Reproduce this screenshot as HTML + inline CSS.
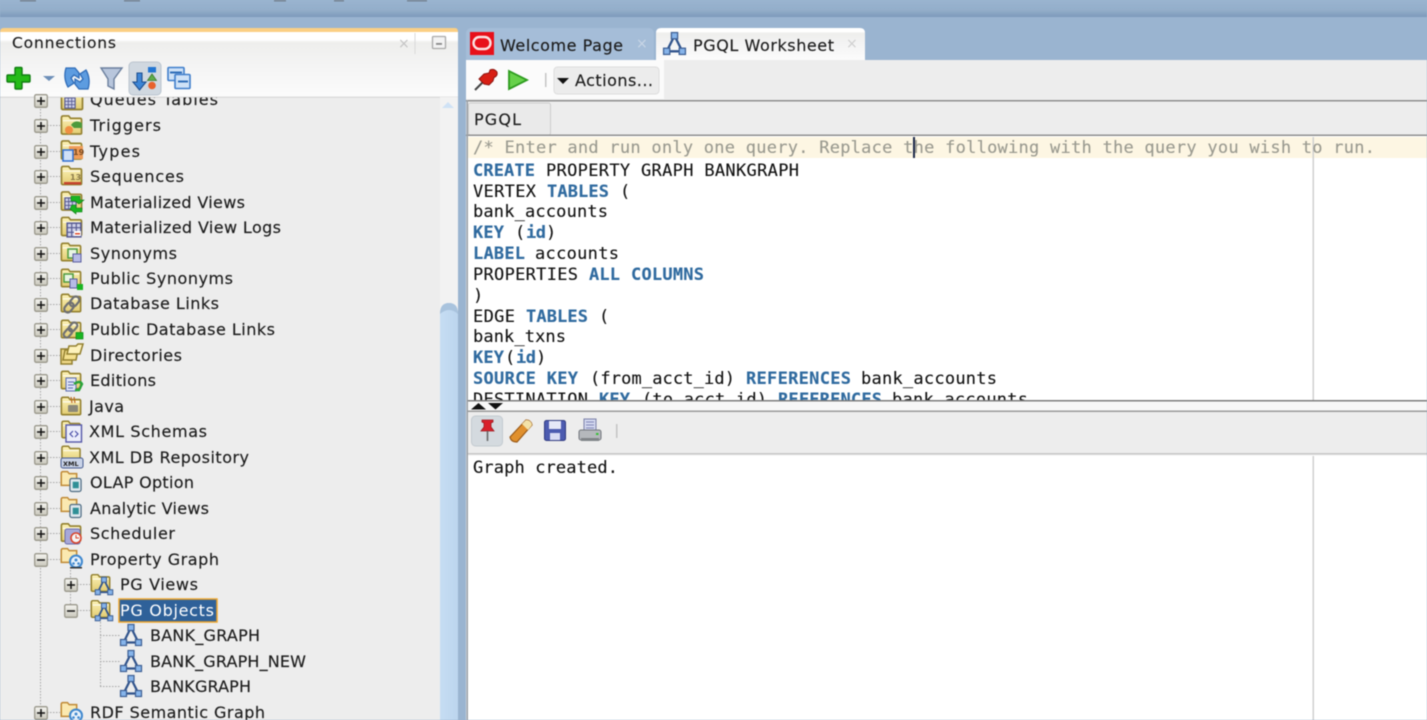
<!DOCTYPE html>
<html lang="en"><head><meta charset="utf-8"><title>PGQL Worksheet</title>
<style>
html,body{margin:0;padding:0;width:1427px;height:720px;overflow:hidden;background:#9ab4d0}
svg{display:block;position:absolute;left:0;top:0;filter:blur(.5px)}
.t{font-family:"DejaVu Sans","Liberation Sans",sans-serif;font-size:16px;fill:#1c1c1c;stroke:#1c1c1c;stroke-width:.15px}
.m{font-family:"DejaVu Sans Mono","Liberation Mono",monospace;font-size:17px;fill:#111;stroke:#111;stroke-width:.12px}
.b{font-weight:bold;fill:#2f6a9f;stroke:#2f6a9f}
.c{fill:#9a9a90;stroke:#9a9a90}
</style></head><body>
<svg width="1427" height="720" viewBox="0 0 1427 720" xmlns="http://www.w3.org/2000/svg">
<defs>
<linearGradient id="gt" x1="0" y1="0" x2="0" y2="1"><stop offset="0" stop-color="#9ab4d0"/><stop offset=".6" stop-color="#93aeca"/><stop offset="1" stop-color="#7d99ba"/></linearGradient>
<linearGradient id="gh" x1="0" y1="0" x2="0" y2="1"><stop offset="0" stop-color="#fff"/><stop offset=".12" stop-color="#fff"/><stop offset=".16" stop-color="#eeeeec"/><stop offset=".45" stop-color="#f3f3f3"/><stop offset="1" stop-color="#fcfcfc"/></linearGradient>
<linearGradient id="gf" x1="0" y1="0" x2="0" y2="1"><stop offset="0" stop-color="#fdf3b8"/><stop offset="1" stop-color="#e2cc72"/></linearGradient>
<linearGradient id="gb" x1="0" y1="0" x2="0" y2="1"><stop offset="0" stop-color="#f6f6f2"/><stop offset="1" stop-color="#c9c7bb"/></linearGradient>
<linearGradient id="gs" x1="0" y1="0" x2="1" y2="0"><stop offset="0" stop-color="#c6ddf3"/><stop offset="1" stop-color="#bcd5ee"/></linearGradient>
<symbol id="f" viewBox="0 0 24 22" overflow="visible"><path d="M1.500 19V3.500Q1.500 1.500 3.500 1.500H9L11 4H21Q22.500 4 22.500 5.500V19.500Q22.500 20.500 21 20.500H3Q1.500 20.500 1.500 19Z" fill="url(#gf)" stroke="#93802f" stroke-width="1.700"/><path d="M3 6.500H21" stroke="#fff" stroke-width="1"/></symbol>
<symbol id="fo" viewBox="0 0 24 22" overflow="visible"><path d="M1.500 18V3.500Q1.500 1.500 3.500 1.500H9L11 4H20V18Z" fill="#fbe9b0" stroke="#c08a35" stroke-width="1.800"/></symbol>
<symbol id="p" viewBox="0 0 14 14"><rect x=".7" y=".7" width="12.600" height="12.600" rx="1.500" fill="url(#gb)" stroke="#9a988c" stroke-width="1.300"/><path d="M3 7H11M7 3V11" stroke="#111" stroke-width="1.500"/></symbol>
<symbol id="n" viewBox="0 0 14 14"><rect x=".7" y=".7" width="12.600" height="12.600" rx="1.500" fill="url(#gb)" stroke="#9a988c" stroke-width="1.300"/><path d="M3 7H11" stroke="#111" stroke-width="1.500"/></symbol>
<symbol id="g" viewBox="0 0 24 24"><path d="M12 4.500L4.500 19.500H19.500Z" fill="none" stroke="#31548c" stroke-width="2.200"/><rect x="9" y="1.500" width="6" height="6" fill="#86b4ea" stroke="#3d5f94" stroke-width="1.200"/><rect x="1.500" y="16.500" width="6" height="6" fill="#86b4ea" stroke="#3d5f94" stroke-width="1.200"/><rect x="16.500" y="16.500" width="6" height="6" fill="#86b4ea" stroke="#3d5f94" stroke-width="1.200"/></symbol>
<symbol id="d" viewBox="0 0 14 16"><rect x="1" y="1" width="12" height="14" rx="2" fill="#dfe8ee" stroke="#4d6b82" stroke-width="1.300"/><rect x="4" y="4.500" width="6.500" height="7" fill="#2f8f96"/></symbol>
<symbol id="u" viewBox="0 0 14 14"><circle cx="7" cy="7" r="6" fill="#e8f2fb" stroke="#3f88cf" stroke-width="2"/><circle cx="7" cy="5.500" r="1.500" fill="#3f88cf"/><circle cx="4.500" cy="9" r="1.300" fill="#3f88cf"/><circle cx="9.500" cy="9" r="1.300" fill="#3f88cf"/></symbol>
<symbol id="tb" viewBox="0 0 14 14"><rect x="1" y="1" width="12" height="12" fill="#cfd2ea" stroke="#55588f" stroke-width="1.300"/><path d="M1 5H13M1 9H13M5 1V13M9 1V13" stroke="#55588f"/></symbol>
<clipPath id="cq"><rect x="0" y="97.500" width="440" height="30"/></clipPath>
<clipPath id="ce"><rect x="468" y="136" width="959" height="264"/></clipPath>
</defs>

<!-- top bar -->
<rect width="1427" height="720" fill="#9ab4d0"/>
<rect width="1427" height="17" fill="url(#gt)"/>
<g fill="#6a7480" opacity=".8"><rect x="20" y="0" width="16" height="1.500"/><rect x="124" y="0" width="16" height="1.500"/><rect x="274" y="0" width="12" height="1.500"/><rect x="334" y="0" width="10" height="1.500"/><rect x="407" y="0" width="20" height="1.500"/></g>

<!-- left panel -->
<path d="M0 32Q0 28 4 28H455Q458 28 458 32V720H0Z" fill="#fbcf84"/>
<rect x="0" y="32" width="458" height="65" fill="url(#gh)"/>
<rect x="0" y="97" width="458" height="623" fill="#ededed"/>
<rect x="0" y="96.500" width="458" height="1.500" fill="#dcdcdc"/>
<text class="t" x="12" y="48" textLength="104" style="font-size:15.500px">Connections</text>
<text x="398" y="48" style="font-family:'DejaVu Sans',sans-serif;font-size:14px;fill:#c4c4c4">×</text>
<rect x="414.500" y="33" width="1" height="21" fill="#d9d9d9"/>
<rect x="432.500" y="36.500" width="13" height="12" rx="1" fill="#f3f3f3" stroke="#a9a9a9" stroke-width="1.300"/><rect x="436" y="43" width="6" height="1.800" fill="#888"/>

<!-- left toolbar -->
<path d="M15 68.500Q15 67.500 16 67.500H21Q22 67.500 22 68.500V75H29Q30 75 30 76V81Q30 82 29 82H22V88Q22 89 21 89H16Q15 89 15 88V82H8Q7 82 7 81V76Q7 75 8 75H15Z" fill="#25bb18" stroke="#0f7d10" stroke-width="1.400"/>
<path d="M43 76H55L49 81Z" fill="#6d8fb8"/>
<path d="M66 68H75L79 73V78L74 75L71 78L74 83L68 87Q63 78 66 68Z" fill="#5d9ce0" stroke="#2f6cb8" stroke-width="1.300"/>
<path d="M88 89H79L75 84V79L80 82L83 79L80 74L86 70Q91 79 88 89Z" fill="#5d9ce0" stroke="#2f6cb8" stroke-width="1.300"/>
<path d="M101 68H122L114 79V89L108 86V79Z" fill="#b8c6dc" stroke="#6b7f9d" stroke-width="1.400"/>
<rect x="129" y="62" width="32" height="33" rx="4" fill="#d0d8e0" stroke="#bac4ce"/>
<path d="M137 73H142V82H146L139.500 90L133 82H137Z" fill="#3d86d6" stroke="#1f4f8f" stroke-width="1.100"/>
<rect x="148" y="67" width="8" height="5.500" fill="#2376d2"/><path d="M152 74L156.500 80.500H147.500Z" fill="#5fae4a" stroke="#3c7a2f" stroke-width=".8"/><circle cx="152" cy="85.500" r="3.800" fill="#e8622c"/>
<rect x="168" y="67.500" width="16" height="13" rx="1" fill="#cfe2f7" stroke="#3f7ecb" stroke-width="1.600"/>
<rect x="175" y="74.500" width="15" height="14" rx="1" fill="#cfe2f7" stroke="#3f7ecb" stroke-width="1.600"/>
<path d="M170 72.500H182M178 81.500H188" stroke="#2f6db8" stroke-width="2"/>

<!-- tree scrollbar -->
<rect x="440" y="97" width="18" height="623" fill="#f2f2f2"/>
<path d="M442 108L448 102L454 108Z" fill="#cfe2f5"/>
<path d="M440 720V314Q440 303 449 303Q458 303 458 314V720Z" fill="url(#gs)"/>
<path d="M440 314Q440 303 449 303Q458 303 458 314Q449 306 440 314Z" fill="#a9c3dd"/>

<!-- tree lines -->
<g stroke="#a5a5a5" stroke-width="1" stroke-dasharray="1.500 1.500" fill="none">
<path d="M40.500 97V720"/><path d="M70.500 570V611"/><path d="M100.500 622V686.500"/>
<path d="M47 125.500H60M47 151.500H60M47 176.500H60M47 202.500H60M47 227.500H60M47 253.500H60M47 278.500H60M47 304.500H60M47 329.500H60M47 355.500H60M47 380.500H60M47 406.500H60M47 431.500H60M47 457.500H60M47 482.500H60M47 508.500H60M47 533.500H60M47 559.500H60M47 712.500H60"/>
<path d="M77 584.500H90M77 610.500H90M100 635.500H120M100 661.500H120M100 686.500H120"/>
</g>

<!-- expanders -->
<use href="#p" x="34" y="94" width="14" height="14"/>
<use href="#p" x="34" y="119" width="14" height="14"/><use href="#p" x="34" y="145" width="14" height="14"/><use href="#p" x="34" y="170" width="14" height="14"/><use href="#p" x="34" y="196" width="14" height="14"/><use href="#p" x="34" y="221" width="14" height="14"/><use href="#p" x="34" y="247" width="14" height="14"/><use href="#p" x="34" y="272" width="14" height="14"/><use href="#p" x="34" y="298" width="14" height="14"/><use href="#p" x="34" y="323" width="14" height="14"/><use href="#p" x="34" y="349" width="14" height="14"/><use href="#p" x="34" y="374" width="14" height="14"/><use href="#p" x="34" y="400" width="14" height="14"/><use href="#p" x="34" y="425" width="14" height="14"/><use href="#p" x="34" y="451" width="14" height="14"/><use href="#p" x="34" y="476" width="14" height="14"/><use href="#p" x="34" y="502" width="14" height="14"/><use href="#p" x="34" y="527" width="14" height="14"/>
<use href="#n" x="34" y="553" width="14" height="14"/>
<use href="#p" x="64" y="578" width="14" height="14"/>
<use href="#n" x="64" y="604" width="14" height="14"/>
<use href="#p" x="34" y="706" width="14" height="14"/>

<!-- clip top row -->
<g clip-path="url(#cq)">
<use href="#f" x="60" y="89" width="24" height="22"/><use href="#tb" x="63" y="97" width="14" height="12"/>
<text class="t" x="90" y="105" textLength="128">Queues Tables</text>
</g>

<!-- folders + overlays -->
<use href="#f" x="60" y="114" width="23" height="22"/><circle cx="69" cy="130" r="4" fill="#ef8f43"/><path d="M71 125Q75 119 82 123V128H74Z" fill="#4d9a3c"/>
<use href="#f" x="60" y="139" width="23" height="22"/><rect x="69" y="146" width="14" height="13" fill="#ef9c58"/><text x="73" y="155" style="font-family:'DejaVu Sans',sans-serif;font-size:8px;font-weight:bold;fill:#7a4a20">19</text><rect x="63" y="150" width="10" height="11" fill="#cfe0f7" stroke="#2f6fd0" stroke-width="1.500"/>
<use href="#f" x="60" y="165" width="23" height="21"/><rect x="64" y="182" width="17" height="2.500" fill="#c4442e"/><text x="70" y="180" style="font-family:'DejaVu Sans',sans-serif;font-size:8px;font-weight:bold;fill:#8a7a4a">13</text>
<use href="#f" x="60" y="190" width="23" height="22"/><use href="#tb" x="64" y="197" width="13" height="13"/><path d="M71 196H80V200H84L79 204L75 201H71ZM72 205H76V208H82V212H76V214L70 209Z" fill="#19b521" stroke="#0c7a12" stroke-width=".6"/>
<use href="#f" x="60" y="216" width="23" height="21"/><use href="#tb" x="66" y="222" width="16" height="16"/><rect x="74" y="231" width="7" height="5" fill="#fff"/><rect x="75" y="233" width="5" height="1.500" fill="#e04a2a"/>
<use href="#f" x="60" y="241" width="22" height="22"/><rect x="68" y="249" width="9" height="9" fill="#e9f5e2" stroke="#4d9a3c" stroke-width="1.500"/><rect x="73" y="254" width="8" height="8" fill="#b7bbe6" stroke="#5a5e9f"/>
<use href="#f" x="60" y="267" width="22" height="22"/><rect x="64" y="274" width="9" height="8" fill="#e9f5e2" stroke="#4d9a3c" stroke-width="1.500"/><rect x="70" y="279" width="7" height="9" fill="#b7bbe6" stroke="#5a5e9f"/><rect x="77" y="284" width="6" height="6" fill="#19b521"/>
<use href="#f" x="60" y="292" width="22" height="22"/>
<g fill="none" stroke="#6f7072" stroke-width="2.200"><rect x="71" y="296" width="7" height="11" rx="3.500" transform="rotate(40 74.500 301.500)"/><rect x="65.500" y="302" width="7" height="11" rx="3.500" transform="rotate(40 69 307.500)"/></g>
<use href="#f" x="60" y="318" width="22" height="22"/>
<g fill="none" stroke="#6f7072" stroke-width="2.200"><rect x="70" y="322" width="6" height="10" rx="3" transform="rotate(40 73 327)"/><rect x="65" y="328" width="6" height="10" rx="3" transform="rotate(40 68 333)"/></g><rect x="76" y="332.500" width="7" height="6.500" fill="#19b521" stroke="#0e8a18" stroke-width=".7"/>
<path d="M61 349H72V364H61Z" fill="#efd98a" stroke="#93802f" stroke-width="1.500"/><path d="M65 350L78 350L76 360H63Z" fill="#f4e08e" stroke="#93802f" stroke-width="1.500"/><path d="M69 346H76L78 344H83L80 354H67Z" fill="#fdf2bc" stroke="#93802f" stroke-width="1.500"/>
<use href="#f" x="60" y="369" width="22" height="22"/><rect x="66" y="378" width="10" height="13" fill="#dfe4f7" stroke="#5a6cb0"/><path d="M68 382H74M68 385H74M68 388H73" stroke="#5a6cb0"/><path d="M74 384Q80 380 82 384L79 390H75" fill="none" stroke="#2aa43a" stroke-width="2.400"/>
<use href="#f" x="60" y="395" width="22" height="22"/><rect x="68" y="405" width="10" height="7" rx="1" fill="#8b8878"/><path d="M71 397L72 403M74 397L75 403" stroke="#c06a1e" stroke-width="1.200"/>
<use href="#f" x="60" y="420" width="22" height="19"/><rect x="66" y="425" width="15.500" height="17" fill="#eceefb" stroke="#5558a8" stroke-width="1.400"/><path d="M73 431L70 434L73 437M75 431L78 434L75 437" fill="none" stroke="#4a4fa8" stroke-width="1.200"/>
<use href="#f" x="60" y="445" width="22" height="19"/><rect x="61" y="458" width="22" height="10" rx="2" fill="#c9d3e8" stroke="#465a8f"/><text x="63" y="466" style="font-family:'DejaVu Sans',sans-serif;font-size:6.500px;font-weight:bold;fill:#222">XML</text>
<use href="#fo" x="60" y="470" width="20" height="19"/><use href="#d" x="69" y="477" width="13" height="16"/>
<use href="#fo" x="60" y="496" width="20" height="19"/><use href="#d" x="69" y="503" width="13" height="16"/>
<use href="#f" x="60" y="522" width="22" height="21"/><rect x="65" y="529" width="15" height="15" rx="2" fill="#a7a8d8" stroke="#6a6cab"/><circle cx="76" cy="538" r="5" fill="#f5f5f5" stroke="#d9442c" stroke-width="1.600"/><path d="M76 535V538H79" stroke="#d9442c" fill="none"/>
<use href="#fo" x="60" y="547" width="20" height="19"/><use href="#u" x="69" y="554" width="14" height="15"/><rect x="70" y="567" width="12" height="1.500" fill="#333"/>
<use href="#f" x="90" y="573" width="21" height="20"/><use href="#g" x="94" y="576" width="20" height="20"/>
<use href="#f" x="90" y="599" width="21" height="20"/><use href="#g" x="94" y="602" width="20" height="20"/>
<use href="#g" x="119" y="623" width="24" height="24"/>
<use href="#g" x="119" y="649" width="24" height="24"/>
<use href="#g" x="119" y="674" width="24" height="24"/>
<use href="#fo" x="60" y="701" width="20" height="19"/><use href="#u" x="69" y="708" width="14" height="15"/>

<!-- tree labels -->
<text class="t" x="90" y="131" textLength="71">Triggers</text>
<text class="t" x="90" y="157" textLength="50">Types</text>
<text class="t" x="90" y="182" textLength="94">Sequences</text>
<text class="t" x="90" y="208" textLength="155">Materialized Views</text>
<text class="t" x="90" y="233" textLength="191">Materialized View Logs</text>
<text class="t" x="90" y="259" textLength="87">Synonyms</text>
<text class="t" x="90" y="284" textLength="143">Public Synonyms</text>
<text class="t" x="90" y="309" textLength="129">Database Links</text>
<text class="t" x="90" y="335" textLength="185">Public Database Links</text>
<text class="t" x="90" y="361" textLength="92">Directories</text>
<text class="t" x="90" y="386" textLength="66">Editions</text>
<text class="t" x="89" y="412" textLength="35">Java</text>
<text class="t" x="89" y="437" textLength="118">XML Schemas</text>
<text class="t" x="89" y="463" textLength="160">XML DB Repository</text>
<text class="t" x="90" y="488" textLength="104">OLAP Option</text>
<text class="t" x="90" y="514" textLength="119">Analytic Views</text>
<text class="t" x="90" y="539" textLength="85">Scheduler</text>
<text class="t" x="90" y="565" textLength="129">Property Graph</text>
<text class="t" x="120" y="590" textLength="78">PG Views</text>
<rect x="119" y="599" width="98" height="23" fill="#2f6199" stroke="#f0a52a" stroke-width="1.500"/>
<text class="t" x="120" y="616" textLength="94" style="fill:#fff;stroke:none">PG Objects</text>
<text class="t" x="150" y="641" textLength="110">BANK_GRAPH</text>
<text class="t" x="150" y="667" textLength="156">BANK_GRAPH_NEW</text>
<text class="t" x="150" y="692" textLength="101">BANKGRAPH</text>
<text class="t" x="90" y="718" textLength="175">RDF Semantic Graph</text>

<!-- right panel: tabs -->
<rect x="466" y="60" width="961" height="660" fill="#ededed"/>
<path d="M466 60V34Q466 28 472 28H648Q654 28 654 34V60Z" fill="#a5bdd8"/>
<rect x="470" y="32" width="24" height="23" fill="#e8101a"/>
<rect x="473.500" y="37" width="17" height="12" rx="6" fill="none" stroke="#fbe3e3" stroke-width="2.400"/>
<text class="t" x="500" y="51" textLength="123">Welcome Page</text>
<text x="636" y="48" style="font-family:'DejaVu Sans',sans-serif;font-size:14px;fill:#c9d6e6">×</text>
<path d="M656 60V33Q656 28 661 28H860Q865 28 865 33V60Z" fill="url(#gh)"/>
<use href="#g" x="662" y="31" width="25" height="25"/>
<text class="t" x="693" y="51" textLength="141">PGQL Worksheet</text>
<text x="846" y="48" style="font-family:'DejaVu Sans',sans-serif;font-size:14px;fill:#cfcfcf">×</text>

<!-- right toolbar -->
<rect x="466" y="60" width="198" height="39" fill="#fbfbfb"/>
<path d="M475 90L484 81" stroke="#444" stroke-width="2"/>
<path d="M479 79L484 74L489 73L490 70Q494 68 497 72Q498 76 494 77.500L493 81L489 85L484 84Z" fill="#d81f14" stroke="#8c1510" stroke-width="1"/>
<path d="M509 71L527 80L509 89Z" fill="#66d14a" stroke="#2c9b1e" stroke-width="1.800"/>
<rect x="545" y="73" width="1.500" height="14" fill="#c4c4c4"/>
<rect x="554" y="67" width="105" height="27" rx="3.500" fill="#ececec" stroke="#dddddd"/>
<path d="M557 78H569L563 84Z" fill="#111"/>
<text class="t" x="575" y="86" textLength="78">Actions...</text>

<!-- tab row -->
<rect x="466" y="100" width="961" height="1.500" fill="#8f8f8f"/>
<rect x="468.500" y="103" width="82" height="32" rx="2" fill="#eaeaea" stroke="#cdcdcd"/>
<text class="t" x="474" y="125" textLength="47">PGQL</text>
<rect x="466" y="134.500" width="961" height="1.500" fill="#8f8f8f"/>

<!-- editor -->
<rect x="468" y="136" width="959" height="264" fill="#fff"/>
<rect x="468" y="137" width="959" height="21" fill="#fdf6e3"/>
<rect x="466.500" y="100" width="1.500" height="620" fill="#9aa0a6"/>
<rect x="1312.500" y="137" width="1.500" height="263" fill="#d0d0d0"/>
<text class="m c" x="473" y="153" textLength="902">/* Enter and run only one query. Replace the following with the query you wish to run.</text>
<rect x="913" y="137" width="2" height="21" fill="#1e2a4a"/>

<g clip-path="url(#ce)">
<text class="m b" x="473" y="176" textLength="62">CREATE</text><text class="m" x="546" y="176" textLength="253">PROPERTY GRAPH BANKGRAPH</text>
<text class="m" x="473" y="197" textLength="63">VERTEX</text><text class="m b" x="547" y="197" textLength="62">TABLES</text><text class="m" x="620" y="197">(</text>
<text class="m" x="473" y="217" textLength="135">bank_accounts</text>
<text class="m b" x="473" y="238" textLength="31">KEY</text><text class="m" x="515" y="238">(</text><text class="m b" x="526" y="238" textLength="20">id</text><text class="m" x="546" y="238">)</text>
<text class="m b" x="473" y="259" textLength="52">LABEL</text><text class="m" x="535" y="259" textLength="84">accounts</text>
<text class="m" x="473" y="280" textLength="105">PROPERTIES</text><text class="m b" x="589" y="280" textLength="31">ALL</text><text class="m b" x="631" y="280" textLength="73">COLUMNS</text>
<text class="m" x="473" y="301">)</text>
<text class="m" x="473" y="322" textLength="42">EDGE</text><text class="m b" x="526" y="322" textLength="62">TABLES</text><text class="m" x="599" y="322">(</text>
<text class="m" x="473" y="342" textLength="93">bank_txns</text>
<text class="m b" x="473" y="363" textLength="31">KEY</text><text class="m" x="505" y="363">(</text><text class="m b" x="516" y="363" textLength="20">id</text><text class="m" x="536" y="363">)</text>
<text class="m b" x="473" y="384" textLength="105">SOURCE KEY</text><text class="m" x="590" y="384" textLength="145">(from_acct_id)</text><text class="m b" x="746" y="384" textLength="105">REFERENCES</text><text class="m" x="861" y="384" textLength="136">bank_accounts</text>
<text class="m" x="473" y="405" textLength="115">DESTINATION</text><text class="m b" x="599" y="405" textLength="31">KEY</text><text class="m" x="642" y="405" textLength="125">(to_acct_id)</text><text class="m b" x="778" y="405" textLength="104">REFERENCES</text><text class="m" x="892" y="405" textLength="136">bank_accounts</text>
</g>

<!-- splitter -->
<rect x="468" y="400" width="959" height="1.500" fill="#7d7d7d"/>
<rect x="468" y="401.500" width="959" height="9" fill="#f7f7f7"/>
<path d="M471 409.500L478.500 403L486 409.500Z" fill="#111"/>
<path d="M488 403H503L495.500 409.500Z" fill="#111"/>
<rect x="468" y="410.500" width="959" height="1.500" fill="#9a9a9a"/>

<!-- result toolbar -->
<rect x="471.500" y="416" width="31" height="30" rx="4" fill="#d4dadf" stroke="#c3cad0"/>
<path d="M482 420H493V422L491 423V427L494 431H481L484 427V423L482 422Z" fill="#d9202a" stroke="#9c1a20" stroke-width=".8"/>
<path d="M487.500 431V441" stroke="#666" stroke-width="1.600"/>
<path d="M510 437L526 420Q531 420 532 425L517 442Q511 442 510 437Z" fill="#e0902e" stroke="#9a5a18" stroke-width="1.200"/>
<path d="M522 424L528 430L532 425Q531 420 526 420Z" fill="#f3e2a8"/>
<rect x="544.500" y="420.500" width="21" height="20" rx="2" fill="#4c5bb0" stroke="#2f3a80"/>
<rect x="549" y="421" width="12" height="8" fill="#e6e8f8"/><rect x="550" y="433" width="10" height="7" fill="#d9dcf4"/>
<rect x="584" y="419" width="12" height="12" fill="#d3d8ef" stroke="#7a80a8"/>
<path d="M586 422H594M586 425H594M586 428H594" stroke="#8086b6"/>
<rect x="579" y="430" width="22" height="10" rx="2" fill="#b5b8bc" stroke="#72767c"/><rect x="581" y="438" width="18" height="3" fill="#808488"/><rect x="596" y="433" width="2.500" height="2" fill="#35c035"/>
<rect x="616" y="424" width="1.500" height="14" fill="#c4c4c4"/>

<!-- result -->
<rect x="468" y="451.500" width="959" height="4" fill="#ededed"/>
<rect x="468" y="453" width="959" height="1.500" fill="#c8c8c8"/>
<rect x="468" y="455.500" width="959" height="264.500" fill="#fff"/>
<rect x="1312.500" y="456" width="1.500" height="264" fill="#d0d0d0"/>
<text class="m" x="473" y="473" textLength="145">Graph created.</text>
</svg>
</body></html>
